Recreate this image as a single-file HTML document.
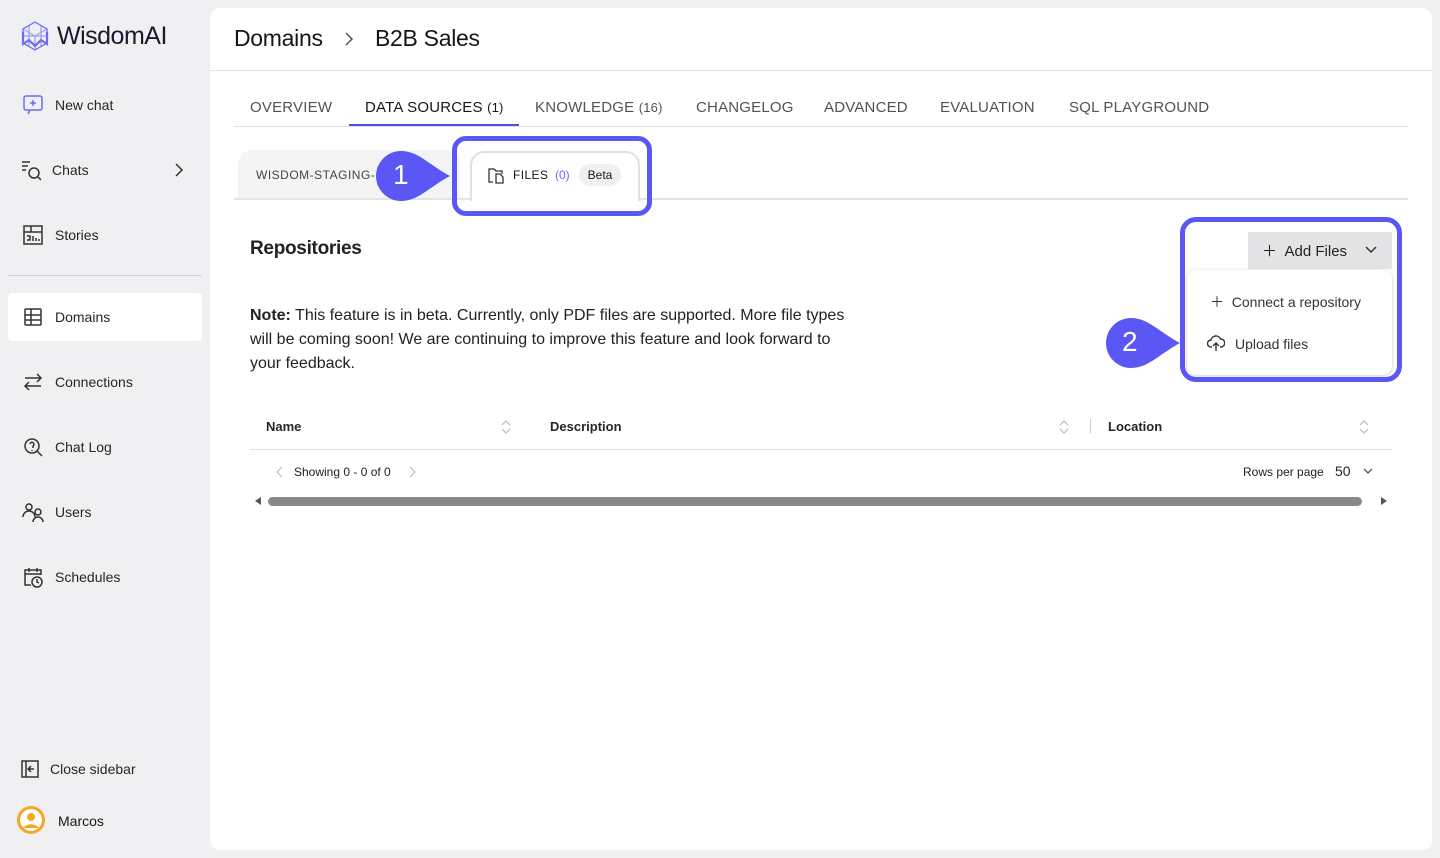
<!DOCTYPE html>
<html><head><style>
*{box-sizing:border-box;margin:0;padding:0}
body{width:1440px;height:858px;background:#f0f0f2;font-family:"Liberation Sans",sans-serif;color:#161616;position:relative;overflow:hidden}
.a{position:absolute}
.nav{position:absolute;left:8px;width:194px;height:48px;display:flex;align-items:center;font-size:14px;color:#262626}
.nav svg{margin-left:14px;margin-right:11px}
.tab{position:absolute;top:99px;font-size:15px;color:#525252;letter-spacing:.2px}
.th{position:absolute;top:419px;font-size:13px;font-weight:bold;color:#262626}
.srt{position:absolute;top:419px}
</style></head><body>
<svg class="a" style="left:20px;top:20px" width="30" height="32" viewBox="0 0 30 32" fill="none" stroke="#6d6cf7" stroke-width="1.3"><path d="M15 2L27 9V23L15 30L3 23V9Z"/><path d="M3 9L15 16L27 9M15 16V30M9 5.5V27M21 5.5V27M3 16L27 16" opacity=".6"/><path d="M3 12V24L9 20L15 26L21 20L27 24V12" stroke-width="2.2"/></svg>
<div class="a" style="left:57px;top:22px;font-size:25px;color:#1a1a2e;letter-spacing:-.5px">WisdomAI</div>
<div class="nav" style="top:81px"><svg width="22" height="22" viewBox="0 0 22 22" fill="none" stroke="#6d6cf7" stroke-width="1.5"><rect x="2" y="2" width="18" height="14" rx="2"/><path d="M11 6v6M8 9h6M8 16l-2 4"/></svg>New chat</div>
<div class="nav" style="top:146px"><svg width="22" height="22" viewBox="0 0 22 22" fill="none" stroke="#333" stroke-width="1.5" style="margin-left:12px;margin-right:10px"><path d="M2 3h8M2 7h6M2 11h4"/><circle cx="14" cy="14" r="5"/><path d="M18 18l3 3"/></svg>Chats</div>
<svg class="a" style="left:172px;top:163px" width="14" height="14" viewBox="0 0 14 14" fill="none" stroke="#333" stroke-width="1.5"><path d="M4 1l6 6-6 6"/></svg>
<div class="nav" style="top:211px"><svg width="22" height="22" viewBox="0 0 22 22" fill="none" stroke="#333" stroke-width="1.5"><rect x="2" y="2" width="18" height="18"/><path d="M2 8h18M9 2v6M5 12h3v4H5M11 12v5M14 14v3M17 15v2"/></svg>Stories</div>
<div class="a" style="left:8px;top:275px;width:194px;height:1px;background:#d6d6d9"></div>
<div class="nav" style="top:293px;background:#fff;border-radius:4px"><svg width="22" height="22" viewBox="0 0 22 22" fill="none" stroke="#333" stroke-width="1.5"><rect x="3" y="3" width="16" height="16" rx="1"/><path d="M3 9h16M3 14h16M9 3v16"/></svg>Domains</div>
<div class="nav" style="top:358px"><svg width="22" height="22" viewBox="0 0 22 22" fill="none" stroke="#333" stroke-width="1.5"><path d="M3 7h16M15 3l4 4-4 4M19 15H3M7 11l-4 4 4 4"/></svg>Connections</div>
<div class="nav" style="top:423px"><svg width="22" height="22" viewBox="0 0 22 22" fill="none" stroke="#333" stroke-width="1.5"><circle cx="10" cy="10" r="7"/><path d="M15 15l5 5M8 8a2 2 0 1 1 3 2v2M10 14v1"/></svg>Chat Log</div>
<div class="nav" style="top:488px"><svg width="22" height="22" viewBox="0 0 22 22" fill="none" stroke="#333" stroke-width="1.5"><circle cx="7" cy="6" r="3"/><path d="M1 16a6 6 0 0 1 12 0"/><circle cx="16" cy="11" r="3"/><path d="M11 21a5 5 0 0 1 10 0"/></svg>Users</div>
<div class="nav" style="top:553px"><svg width="22" height="22" viewBox="0 0 22 22" fill="none" stroke="#333" stroke-width="1.5"><path d="M9 19H3V4h16v5M3 8h16M7 2v4M15 2v4"/><circle cx="15" cy="16" r="5"/><path d="M15 13v3l2 1"/></svg>Schedules</div>
<div class="nav" style="top:745px;left:10px"><svg width="20" height="20" viewBox="0 0 20 20" fill="none" stroke="#333" stroke-width="1.5" style="margin-left:10px;margin-right:10px"><rect x="2" y="2" width="16" height="16"/><path d="M6 2v16M14 10H9M11 7l-3 3 3 3"/></svg>Close sidebar</div>
<svg class="a" style="left:16px;top:805px" width="30" height="30" viewBox="0 0 30 30"><circle cx="15" cy="15" r="14" fill="#f5a623"/><circle cx="15" cy="15" r="11" fill="#fff"/><circle cx="15" cy="12" r="4" fill="#f5a623"/><path d="M7 23a9 7 0 0 1 16 0" fill="#f5a623"/></svg>
<div class="a" style="left:58px;top:813px;font-size:14px">Marcos</div>

<div class="a" style="left:210px;top:8px;width:1222px;height:842px;background:#fff;border-radius:10px"></div>
<div class="a" style="left:210px;top:70px;width:1222px;height:1px;background:#e0e0e0"></div>
<div class="a" style="left:234px;top:25px;font-size:23px;letter-spacing:-.3px">Domains</div>
<svg class="a" style="left:342px;top:31px" width="14" height="16" viewBox="0 0 14 16" fill="none" stroke="#555" stroke-width="1.5"><path d="M4 2l6 6-6 6"/></svg>
<div class="a" style="left:375px;top:25px;font-size:23px;letter-spacing:-.3px">B2B Sales</div>

<div class="tab" style="left:250px">OVERVIEW</div>
<div class="tab" style="left:365px;color:#161616">DATA SOURCES <span style="font-size:13px">(1)</span></div>
<div class="tab" style="left:535px">KNOWLEDGE <span style="font-size:13px">(16)</span></div>
<div class="tab" style="left:696px">CHANGELOG</div>
<div class="tab" style="left:824px">ADVANCED</div>
<div class="tab" style="left:940px">EVALUATION</div>
<div class="tab" style="left:1069px">SQL PLAYGROUND</div>
<div class="a" style="left:234px;top:126px;width:1174px;height:1px;background:#e0e0e0"></div>
<div class="a" style="left:349px;top:124px;width:170px;height:2px;background:#4f4fe0"></div>

<div class="a" style="left:238px;top:150px;width:222px;height:48px;background:#f4f4f4;border-radius:14px 14px 0 0"></div>
<div class="a" style="left:256px;top:168px;font-size:12px;color:#444;letter-spacing:.5px">WISDOM-STAGING-</div>
<div class="a" style="left:234px;top:198px;width:1174px;height:2px;background:#e4e4e4"></div>
<div class="a" style="left:470px;top:151px;width:170px;height:50px;background:#fff;border:2px solid #e0e0e0;border-bottom:none;border-radius:14px 14px 0 0"></div>
<svg class="a" style="left:487px;top:167px" width="18" height="17" viewBox="0 0 18 17" fill="none" stroke="#333" stroke-width="1.3"><path d="M6 15H2V2h5l2 2h6v3"/><path d="M9 7h4l3 3v6H9z"/></svg>
<div class="a" style="left:513px;top:168px;font-size:12px;letter-spacing:.4px">FILES</div>
<div class="a" style="left:555px;top:168px;font-size:12px;color:#7b61ff">(0)</div>
<div class="a" style="left:579px;top:164px;width:42px;height:22px;background:#f0f0f0;border-radius:11px;font-size:12px;text-align:center;line-height:22px">Beta</div>
<div class="a" style="left:452px;top:136px;width:200px;height:80px;border:5px solid #5b57f5;border-radius:14px"></div>
<svg class="a" style="left:368px;top:150px" width="84" height="52" viewBox="0 0 84 52"><path d="M33 1C50 1 60 14 82 26C60 38 50 51 33 51A25 25 0 0 1 33 1Z" fill="#5b57f5"/></svg>
<div class="a" style="left:393px;top:159px;font-size:28px;color:#fff">1</div>

<div class="a" style="left:250px;top:238px;font-size:19px;font-weight:bold;color:#222;letter-spacing:-.3px">Repositories</div>
<div class="a" style="left:250px;top:304px;width:602px;font-size:16px;line-height:24px;color:#222"><b>Note:</b> This feature is in beta. Currently, only PDF files are supported. More file types will be coming soon! We are continuing to improve this feature and look forward to your feedback.</div>

<div class="a" style="left:1248px;top:232px;width:144px;height:37px;background:#e4e4e6"></div>
<div class="a" style="left:1262px;top:240px;font-size:15px;color:#222">＋&nbsp; Add Files</div>
<svg class="a" style="left:1364px;top:244px" width="14" height="12" viewBox="0 0 14 12" fill="none" stroke="#333" stroke-width="1.5"><path d="M2 3l5 5 5-5"/></svg>
<div class="a" style="left:1187px;top:270px;width:205px;height:105px;background:#fff;border-radius:10px;box-shadow:0 1px 4px rgba(0,0,0,.2)"></div>
<div class="a" style="left:1210px;top:292px;font-size:14px;color:#333">＋&nbsp;&nbsp;Connect a repository</div>
<svg class="a" style="left:1207px;top:335px" width="18" height="17" viewBox="0 0 18 17" fill="none" stroke="#333" stroke-width="1.4"><path d="M5 12H4a3.5 3.5 0 0 1 0-7 5 5 0 0 1 9.5-1 4 4 0 0 1 0.5 8h-1M9 16V8M6 11l3-3 3 3"/></svg>
<div class="a" style="left:1235px;top:336px;font-size:14px;color:#333">Upload files</div>
<div class="a" style="left:1180px;top:217px;width:222px;height:165px;border:5px solid #5b57f5;border-radius:16px"></div>
<svg class="a" style="left:1098px;top:317px" width="84" height="52" viewBox="0 0 84 52"><path d="M33 1C50 1 60 14 82 26C60 38 50 51 33 51A25 25 0 0 1 33 1Z" fill="#5b57f5"/></svg>
<div class="a" style="left:1122px;top:326px;font-size:28px;color:#fff">2</div>

<div class="th" style="left:266px">Name</div>
<div class="th" style="left:550px">Description</div>
<div class="th" style="left:1108px">Location</div>
<svg class="srt" style="left:500px" width="12" height="16" viewBox="0 0 12 16" fill="none" stroke="#bbb" stroke-width="1.2"><path d="M2 6l4-4 4 4M2 10l4 4 4-4"/></svg>
<svg class="srt" style="left:1058px" width="12" height="16" viewBox="0 0 12 16" fill="none" stroke="#bbb" stroke-width="1.2"><path d="M2 6l4-4 4 4M2 10l4 4 4-4"/></svg>
<svg class="srt" style="left:1358px" width="12" height="16" viewBox="0 0 12 16" fill="none" stroke="#bbb" stroke-width="1.2"><path d="M2 6l4-4 4 4M2 10l4 4 4-4"/></svg>
<div class="a" style="left:1090px;top:419px;width:1px;height:14px;background:#ccc"></div>
<div class="a" style="left:250px;top:449px;width:1142px;height:1px;background:#e0e0e0"></div>
<svg class="a" style="left:275px;top:465px" width="10" height="14" viewBox="0 0 10 14" fill="none" stroke="#bbb" stroke-width="1.2"><path d="M7 2L2 7l5 5"/></svg>
<div class="a" style="left:294px;top:465px;font-size:12px;color:#222">Showing 0 - 0 of 0</div>
<svg class="a" style="left:407px;top:465px" width="10" height="14" viewBox="0 0 10 14" fill="none" stroke="#bbb" stroke-width="1.2"><path d="M3 2l5 5-5 5"/></svg>
<div class="a" style="left:1243px;top:465px;font-size:12px;color:#222">Rows per page</div>
<div class="a" style="left:1335px;top:463px;font-size:14px;color:#222">50</div>
<svg class="a" style="left:1362px;top:466px" width="12" height="10" viewBox="0 0 12 10" fill="none" stroke="#555" stroke-width="1.3"><path d="M2 3l4 4 4-4"/></svg>
<div class="a" style="left:255px;top:497px;width:0;height:0;border:4px solid transparent;border-right:6px solid #555;border-left:none"></div>
<div class="a" style="left:268px;top:497px;width:1094px;height:9px;background:#888;border-radius:5px"></div>
<div class="a" style="left:1381px;top:497px;width:0;height:0;border:4px solid transparent;border-left:6px solid #555;border-right:none"></div>
</body></html>
